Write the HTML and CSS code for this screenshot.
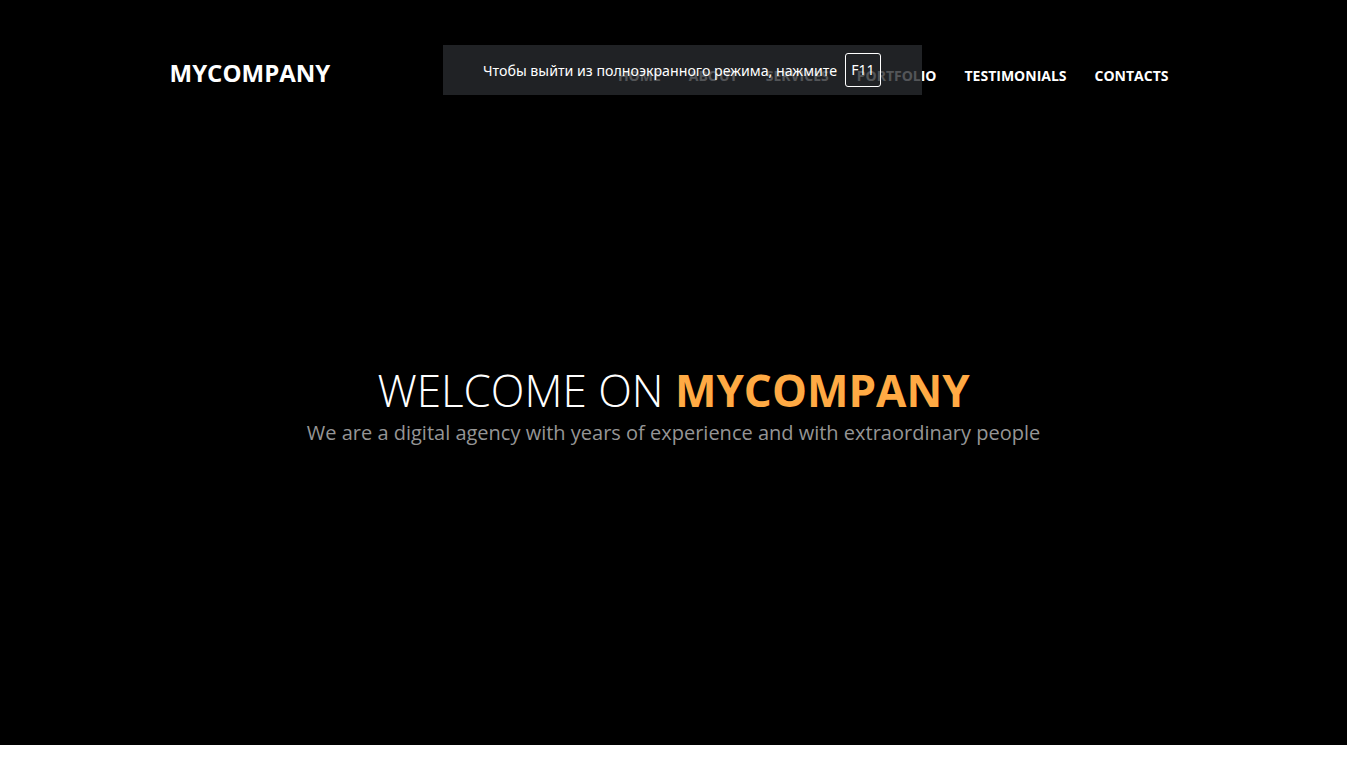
FILE: index.html
```html
<!DOCTYPE html>
<html lang="en">
<head>
<meta charset="utf-8">
<title>MyCompany</title>
<link rel="stylesheet" href="styles.css">
</head>
<body>
<section class="hero">
  <header class="header">
    <div class="logo">MYCOMPANY</div>
    <nav class="nav">
      <a href="#">HOME</a>
      <a href="#">ABOUT</a>
      <a href="#">SERVICES</a>
      <a href="#">PORTFOLIO</a>
      <a href="#">TESTIMONIALS</a>
      <a href="#">CONTACTS</a>
    </nav>
  </header>
  <div class="intro">
    <h1 class="title">WELCOME ON <strong>MYCOMPANY</strong></h1>
    <p class="subtitle">We are a digital agency with years of experience and with extraordinary people</p>
  </div>
</section>
<div class="fs-notice">Чтобы выйти из полноэкранного режима, нажмите <span class="key">F11</span></div>
</body>
</html>
```
FILE: styles.css
```css
html, body {
  margin: 0;
  padding: 0;
  background: #fff;
  font-family: "Open Sans", "Noto Sans", sans-serif;
}
.hero {
  height: 745px;
  background: #000;
  display: flex;
  flex-direction: column;
}
.header {
  width: 1000px;
  margin: 0 auto;
  padding-top: 57px;
  display: flex;
  justify-content: space-between;
  align-items: center;
  box-sizing: border-box;
  transform: translateX(-4px);
}
.logo {
  color: #fff;
  font-weight: 700;
  font-size: 24px;
  line-height: 32px;
}
.nav {
  display: flex;
  gap: 28px;
  padding-top: 6px;
  margin-right: 1px;
}
.nav a {
  color: #fff;
  text-decoration: none;
  font-weight: 700;
  font-size: 14px;
  line-height: 20px;
}
.intro {
  text-align: center;
  margin-top: 275px;
}
.title {
  margin: 0;
  color: #fff;
  font-weight: 300;
  font-size: 44px;
  line-height: 52px;
}
.title strong {
  color: #ffaa44;
  font-weight: 700;
}
.subtitle {
  margin: 3px 0 0;
  color: #959595;
  font-size: 20px;
  line-height: 28px;
}
.fs-notice {
  position: absolute;
  left: 443px;
  top: 45px;
  width: 479px;
  height: 50px;
  box-sizing: border-box;
  background: rgba(40, 42, 46, 0.8);
  color: #fff;
  font-family: "Noto Sans", "Open Sans", sans-serif;
  font-size: 14.2px;
  display: flex;
  align-items: center;
  padding-left: 40px;
  gap: 8px;
}
.fs-notice .key {
  border: 1px solid #fff;
  border-radius: 3px;
  padding: 0 5px;
  height: 34px;
  line-height: 32px;
  box-sizing: border-box;
}
```
